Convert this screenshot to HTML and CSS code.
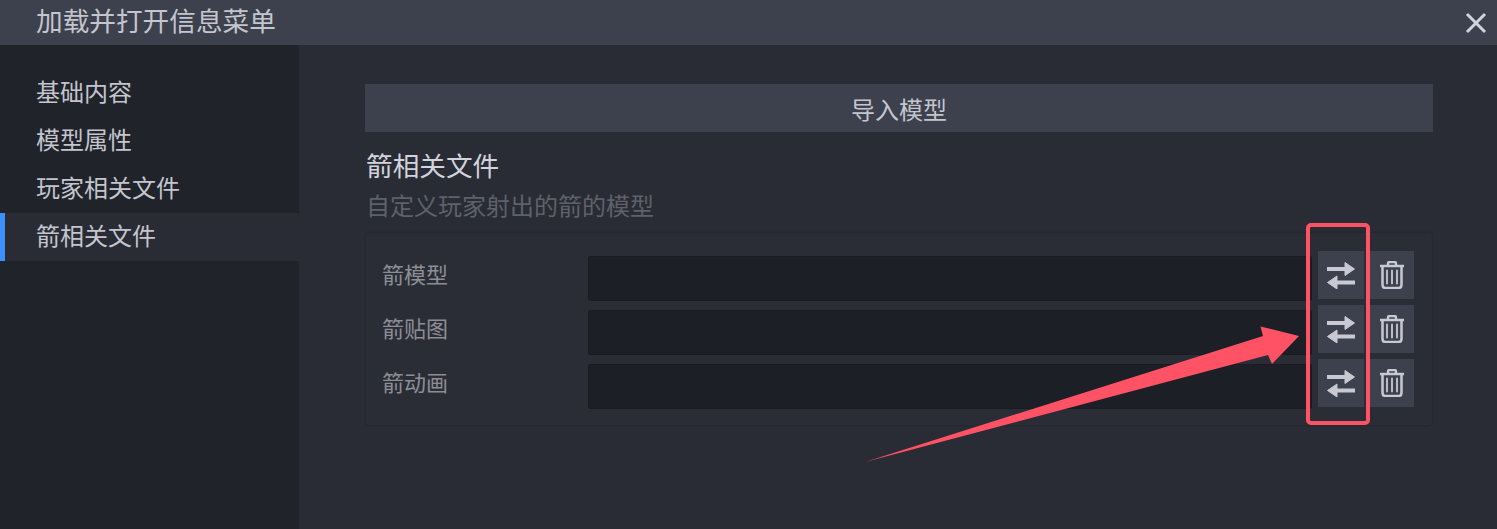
FILE: index.html
```html
<!DOCTYPE html>
<html lang="zh-CN">
<head>
    <meta charset="UTF-8">
    <title>加载并打开信息菜单</title>
    <link rel="stylesheet" href="styles.css">
</head>
<body>
    <svg width="0" height="0" class="icon-defs">
        <symbol id="icon-swap" viewBox="0 0 28 28">
            <path d="M0 8h19" class="swap-line"/>
            <path d="M18 1.5 L27.5 8 L18 14.5Z" class="swap-head"/>
            <path d="M28 21.5H9" class="swap-line"/>
            <path d="M10 15 L0.5 21.5 L10 28Z" class="swap-head"/>
        </symbol>
        <symbol id="icon-trash" viewBox="0 0 24 28">
            <path d="M0 5h24M8 5V2.5Q8 1 9.5 1h5Q16 1 16 2.5V5M2.5 5v19q0 3 3 3h13q3 0 3-3V5" class="trash-line"/>
            <path d="M7 9.5v13M12 9.5v13M17 9.5v13" class="trash-bars"/>
        </symbol>
    </svg>

    <header class="titlebar">
        <span class="titlebar-text">加载并打开信息菜单</span>
        <button class="close-button" aria-label="关闭">
            <svg width="22" height="22" viewBox="0 0 22 22"><path d="M2 2 L20 20 M20 2 L2 20"/></svg>
        </button>
    </header>

    <div class="layout">
        <nav class="sidebar">
            <a class="nav-item">基础内容</a>
            <a class="nav-item">模型属性</a>
            <a class="nav-item">玩家相关文件</a>
            <a class="nav-item active">箭相关文件</a>
        </nav>

        <main class="content">
            <button class="import-button">导入模型</button>
            <h2 class="section-title">箭相关文件</h2>
            <p class="section-desc">自定义玩家射出的箭的模型</p>

            <div class="card">
                <div class="file-row">
                    <label class="file-label">箭模型</label>
                    <input type="text" class="file-input">
                    <button class="icon-button swap"><svg width="28" height="28"><use href="#icon-swap"/></svg></button>
                    <button class="icon-button trash"><svg width="24" height="28"><use href="#icon-trash"/></svg></button>
                </div>
                <div class="file-row">
                    <label class="file-label">箭贴图</label>
                    <input type="text" class="file-input">
                    <button class="icon-button swap"><svg width="28" height="28"><use href="#icon-swap"/></svg></button>
                    <button class="icon-button trash"><svg width="24" height="28"><use href="#icon-trash"/></svg></button>
                </div>
                <div class="file-row">
                    <label class="file-label">箭动画</label>
                    <input type="text" class="file-input">
                    <button class="icon-button swap"><svg width="28" height="28"><use href="#icon-swap"/></svg></button>
                    <button class="icon-button trash"><svg width="24" height="28"><use href="#icon-trash"/></svg></button>
                </div>
            </div>
        </main>
    </div>

    <!-- red annotation drawn over the screenshot -->
    <div class="note-box"></div>
    <svg class="note-arrow" width="1497" height="529" viewBox="0 0 1497 529">
        <polygon points="865,462 1263,336 1260.5,326.5 1299,336 1272,364 1268,355"/>
    </svg>
</body>
</html>
```

FILE: styles.css
```css
* {
    box-sizing: border-box;
}

html, body {
    height: 100%;
}

body {
    margin: 0;
    height: 529px;
    overflow: hidden;
    display: flex;
    flex-direction: column;
    position: relative;
    background-color: #292c35;
    color: #c4c5cf;
    font-family: "Liberation Sans", "Noto Sans CJK SC", sans-serif;
}

.icon-defs {
    position: absolute;
}

.titlebar {
    height: 45px;
    flex-shrink: 0;
    display: flex;
    justify-content: space-between;
    align-items: center;
    padding: 0 10px 0 36px;
    background-color: #3d404d;
}

.titlebar-text {
    font-size: 26.67px;
    line-height: 45px;
}

.close-button {
    width: 22px;
    height: 22px;
    padding: 0;
    border: none;
    background: none;
    display: flex;
}

.close-button path {
    fill: none;
    stroke: #d2d3dc;
    stroke-width: 3;
}

.layout {
    flex: 1;
    display: flex;
    min-height: 0;
}

.sidebar {
    width: 299px;
    flex-shrink: 0;
    padding-top: 24px;
    background-color: #20232a;
}

.nav-item {
    display: block;
    height: 48px;
    line-height: 48px;
    padding-left: 36px;
    font-size: 24px;
}

.nav-item.active {
    padding-left: 31px;
    border-left: 5px solid #3d8eff;
    background-color: #292c35;
}

.content {
    flex: 1;
    padding: 39px 64px 0 66px;
}

.import-button {
    display: block;
    width: 100%;
    height: 48px;
    border: none;
    padding: 0;
    background-color: #3d404d;
    color: #c4c5cf;
    font-family: inherit;
    font-size: 24px;
}

.section-title {
    margin: 15px 0 0 1px;
    font-size: 26.67px;
    font-weight: normal;
    line-height: 40px;
    color: #d2d3dc;
}

.section-desc {
    margin: 0 0 0 1px;
    font-size: 24px;
    line-height: 40px;
    color: #5f616a;
}

.card {
    margin: 6px 1px 0;
    padding: 18px 18px 18px 16px;
    display: flex;
    flex-direction: column;
    gap: 6px;
    background-color: #2a2d36;
    border-radius: 3px;
    box-shadow: 0 0 2px #1e2027;
}

.file-row {
    height: 48px;
    display: flex;
}

.file-label {
    width: 206px;
    flex-shrink: 0;
    line-height: 50px;
    font-size: 22px;
    color: #8d8e95;
}

.file-input {
    flex: 1;
    height: 45px;
    margin: 5px 6px 0 0;
    border: 1px solid #1a1c22;
    border-radius: 2px;
    background-color: #1d1f26;
    outline: none;
}

.icon-button {
    height: 48px;
    padding: 0;
    border: none;
    display: flex;
    align-items: center;
    justify-content: center;
    background-color: #3d404d;
}

.icon-button.swap {
    width: 46px;
}

.icon-button.trash {
    width: 45px;
    margin-left: 5px;
}

.swap-line {
    fill: none;
    stroke: #c8c9d3;
    stroke-width: 4;
    stroke-linecap: round;
}

.swap-head {
    fill: #c8c9d3;
    stroke: #c8c9d3;
    stroke-width: 1;
    stroke-linejoin: round;
}

.trash-line, .trash-bars {
    fill: none;
    stroke: #c8c9d3;
    stroke-linecap: round;
}

.trash-line {
    stroke-width: 2.5;
}

.trash-bars {
    stroke-width: 1.8;
}

.note-box {
    position: absolute;
    left: 1306px;
    top: 223px;
    width: 64px;
    height: 202px;
    border: 4px solid #ff5265;
    border-radius: 5px;
}

.note-arrow {
    position: absolute;
    left: 0;
    top: 0;
}

.note-arrow polygon {
    fill: #ff5265;
}
```
